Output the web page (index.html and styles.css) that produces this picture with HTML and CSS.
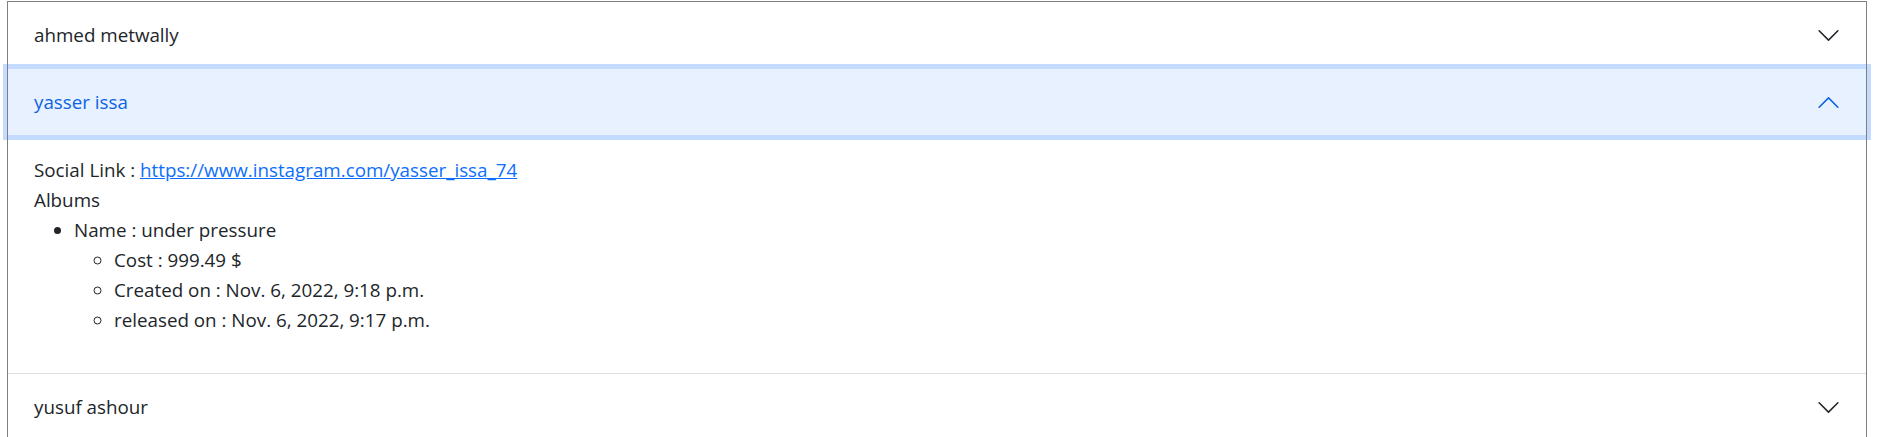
FILE: index.html
```html
<!DOCTYPE html>
<html lang="en">
<head>
<meta charset="utf-8">
<title>Artists</title>
<link rel="stylesheet" href="styles.css">
</head>
<body>
<div class="accordion">
  <div class="item">
    <button class="acc-btn" type="button">
      <span class="label">ahmed metwally</span>
      <svg class="chev" viewBox="0 0 16 16"><path fill="currentColor" fill-rule="evenodd" d="M1.646 4.646a.5.5 0 0 1 .708 0L8 10.293l5.646-5.647a.5.5 0 0 1 .708.708l-6 6a.5.5 0 0 1-.708 0l-6-6a.5.5 0 0 1 0-.708z"/></svg>
    </button>
  </div>
  <div class="item">
    <button class="acc-btn open" type="button">
      <span class="label">yasser issa</span>
      <svg class="chev" viewBox="0 0 16 16"><path fill="currentColor" fill-rule="evenodd" d="M1.646 4.646a.5.5 0 0 1 .708 0L8 10.293l5.646-5.647a.5.5 0 0 1 .708.708l-6 6a.5.5 0 0 1-.708 0l-6-6a.5.5 0 0 1 0-.708z"/></svg>
    </button>
    <div class="acc-body">
      <div>Social Link : <a href="#">https://www.instagram.com/yasser_issa_74</a></div>
      <div>Albums</div>
      <ul class="albums">
        <li>Name : under pressure
          <ul class="details">
            <li>Cost : 999.49 $</li>
            <li>Created on : Nov. 6, 2022, 9:18 p.m.</li>
            <li>released on : Nov. 6, 2022, 9:17 p.m.</li>
          </ul>
        </li>
      </ul>
    </div>
  </div>
  <div class="item">
    <button class="acc-btn" type="button">
      <span class="label">yusuf ashour</span>
      <svg class="chev" viewBox="0 0 16 16"><path fill="currentColor" fill-rule="evenodd" d="M1.646 4.646a.5.5 0 0 1 .708 0L8 10.293l5.646-5.647a.5.5 0 0 1 .708.708l-6 6a.5.5 0 0 1-.708 0l-6-6a.5.5 0 0 1 0-.708z"/></svg>
    </button>
  </div>
</div>
</body>
</html>
```
FILE: styles.css
```css
html, body {
  margin: 0;
  padding: 0;
  background: #fff;
}
body {
  font-family: "Open Sans", "Noto Sans", sans-serif;
  font-size: 18.8px;
  line-height: 30px;
  color: #212529;
  padding: 1px 0 0 7px;
  overflow: hidden;
  height: 437px;
  box-sizing: border-box;
}
.accordion {
  width: 1860px;
  box-sizing: border-box;
  padding: 1px 1px 0 1px;
  outline: 1px solid #808080;
  outline-offset: -1px;
}
.item {
  border-bottom: 1px solid #dfdfdf;
  background: transparent;
}
.acc-btn {
  display: flex;
  align-items: center;
  width: 100%;
  margin: 0;
  border: 0;
  padding: 18px 25px 18px 26px;
  font: inherit;
  line-height: 30px;
  color: #212529;
  background: #fff;
  text-align: left;
  cursor: pointer;
}
.label {
  flex: 1;
}
.chev {
  width: 25px;
  height: 25px;
  flex-shrink: 0;
  color: #212529;
}
.acc-btn.open {
  color: #0c63e4;
  background: #e7f1ff;
  box-shadow: 0 0 0 5px #c2dbfe;
}
.acc-btn.open .chev {
  color: #0c63e4;
  transform: rotate(180deg);
}
.acc-body {
  padding: 20px 25px 18px 26px;
}
.acc-body a {
  color: #0d6efd;
  text-decoration: underline;
}
.albums {
  margin: 0 0 20px 0;
  padding-left: 40px;
  list-style: disc;
}
.details {
  margin: 0;
  padding-left: 40px;
  list-style: circle;
}
```
